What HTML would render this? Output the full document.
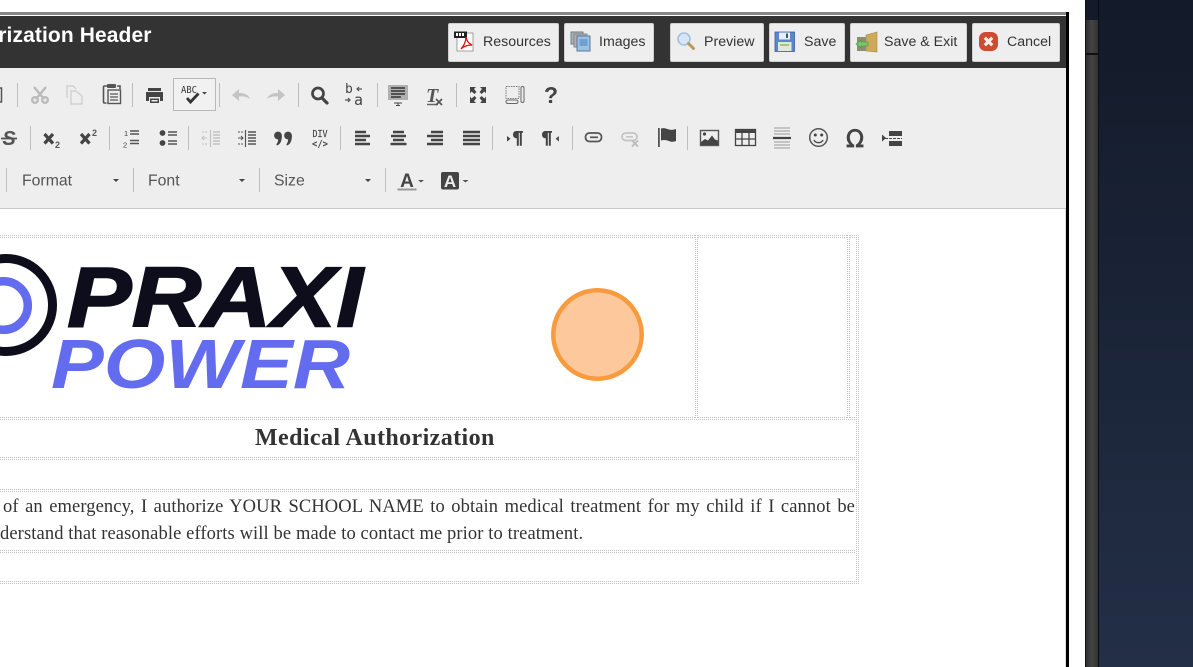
<!DOCTYPE html>
<html><head><meta charset="utf-8"><style>
html,body{margin:0;padding:0;width:1193px;height:667px;overflow:hidden;background:#fff;font-family:"Liberation Sans",sans-serif}
.a{position:absolute}
.btn{position:absolute;top:23px;height:37px;background:#eee;border:1px solid #d0d0d0;border-radius:2px;box-sizing:content-box}
.bt{position:absolute;top:33px;font-size:14.2px;line-height:16px;color:#333;white-space:nowrap}
.dh{position:absolute;height:3px;background:linear-gradient(#fff,#fff) center/100% 1px no-repeat,repeating-linear-gradient(90deg,#c2c2c2 0 1px,#fff 1px 2px)}
.dv{position:absolute;width:3px;background:linear-gradient(#fff,#fff) center/1px 100% no-repeat,repeating-linear-gradient(180deg,#c2c2c2 0 1px,#fff 1px 2px)}
.txt{position:absolute;font-family:"Liberation Serif",serif;color:#333;white-space:nowrap}
</style></head><body>
<div class="a" style="left:1085px;top:0;width:108px;height:667px;background:linear-gradient(180deg,#131a29 0,#232f47 100%)"></div>
<div class="a" style="left:1085px;top:20px;width:13px;height:647px;background:linear-gradient(90deg,#2b2b2b,#444 50%,#333)"></div>
<div class="a" style="left:1085px;top:0;width:1px;height:667px;background:#111"></div>
<div class="a" style="left:1098px;top:0;width:1px;height:667px;background:#0a0d14"></div>
<div class="a" style="left:1086px;top:53px;width:12px;height:2px;background:#111"></div>
<div class="a" style="left:0;top:0;width:1085px;height:667px;background:#fff;border-top-right-radius:15px"></div>
<div class="a" style="left:0;top:12px;width:1066px;height:3px;background:#888"></div>
<div class="a" style="left:0;top:16px;width:1066px;height:52px;background:#333"></div>
<div class="a" style="left:1066px;top:12px;width:3px;height:655px;background:#000"></div>
<div class="a" style="left:0;top:68px;width:1066px;height:140px;background:#eee"></div>
<div class="a" style="left:0;top:208px;width:1066px;height:1px;background:#c8c8c8"></div>
<div class="a" style="left:1065px;top:209px;width:1px;height:458px;background:#ddd"></div>

<svg class="a" style="left:0;top:0" width="1066" height="70">
<text x="151.500" y="42" text-anchor="end" font-family="Liberation Sans" font-weight="700" font-size="21" letter-spacing=".1" fill="#fff">Medical Authorization Header</text>
</svg>
<div class="btn" style="left:448px;width:109px"></div>
<div class="btn" style="left:564px;width:88px"></div>
<div class="btn" style="left:670px;width:92px"></div>
<div class="btn" style="left:769px;width:74px"></div>
<div class="btn" style="left:850px;width:115px"></div>
<div class="btn" style="left:972px;width:86px"></div>
<div class="bt" style="left:483px;top:34px">Resources</div>
<div class="bt" style="left:599px;top:34px">Images</div>
<div class="bt" style="left:704px;top:34px">Preview</div>
<div class="bt" style="left:804px;top:34px">Save</div>
<div class="bt" style="left:884px;top:34px">Save &amp; Exit</div>
<div class="bt" style="left:1007px;top:34px">Cancel</div>

<!-- button icons -->
<svg class="a" style="left:0;top:0" width="1066" height="70">
<!-- pdf -->
<path d="M457 33h16v18h-16z" fill="#fff" stroke="#888" stroke-width=".8"/>
<rect x="454" y="31.500" width="13" height="6.500" fill="#222"/>
<path d="M456 33h2v3h-2zM459 33h2v3h-2zM462 33h2v3h-2z" fill="#fff"/>
<path d="M461 49c3-3 5-8 5-12 1 4 2 6 6 8-4 0-8 1-11 4z" fill="none" stroke="#d11" stroke-width="1.300"/>
<!-- images -->
<rect x="571" y="32" width="12" height="12" fill="#a8b8a8" stroke="#6a7f96"/>
<rect x="574" y="34" width="13" height="13" fill="#c0a8a8" stroke="#7a8a9a"/>
<rect x="577" y="36" width="13" height="15" fill="#9cc0e0" stroke="#5a7a9a"/>
<rect x="579.500" y="39" width="8" height="7" fill="#6fa0d4"/>
<!-- preview -->
<circle cx="684" cy="39" r="6" fill="#d6e6f7" stroke="#a5c0de" stroke-width="1.600"/>
<path d="M688.500 43.500l5 5" stroke="#b79a5c" stroke-width="3" stroke-linecap="round"/>
<!-- save -->
<path d="M775 32h19.500v19.500h-19.500z" fill="#5b86cc" stroke="#3a5e99" stroke-width=".8"/>
<rect x="779" y="32.500" width="11" height="7" fill="#e8eef7"/>
<rect x="786" y="33.500" width="2" height="4.500" fill="#456"/>
<rect x="778" y="42" width="13.500" height="9" fill="#dfe8dc"/>
<path d="M780 45h9" stroke="#9ab56e" stroke-width="1.500"/>
<!-- save & exit -->
<path d="M866 35l11-3v20l-11-1z" fill="#cdaa5a" stroke="#a68a44" stroke-width=".6"/>
<rect x="857" y="37" width="9" height="14" fill="#8a9070"/>
<path d="M856 44l5-4v2h7v4h-7v2z" fill="#7cc46a" stroke="#4d8f42" stroke-width=".6"/>
<!-- cancel -->
<rect x="979" y="32" width="19" height="19" rx="6.500" fill="#cf4a32"/>
<path d="M984.800 37.800l7.400 7.400m0-7.400l-7.400 7.400" stroke="#f6efe8" stroke-width="3.200"/>
</svg>

<!-- toolbar -->
<svg class="a" style="left:0;top:68px" width="1066" height="140" viewBox="0 68 1066 140" font-family="Liberation Sans">
<g fill="#bdbdbd">
<rect x="17" y="83" width="1" height="24"/><rect x="132" y="83" width="1" height="24"/><rect x="219" y="83" width="1" height="24"/><rect x="298" y="83" width="1" height="24"/><rect x="377" y="83" width="1" height="24"/><rect x="456" y="83" width="1" height="24"/>
<rect x="30" y="126" width="1" height="24"/><rect x="109" y="126" width="1" height="24"/><rect x="188" y="126" width="1" height="24"/><rect x="340" y="126" width="1" height="24"/><rect x="492" y="126" width="1" height="24"/><rect x="572" y="126" width="1" height="24"/><rect x="687" y="126" width="1" height="24"/>
<rect x="6" y="168" width="1" height="24"/><rect x="133" y="168" width="1" height="24"/><rect x="259" y="168" width="1" height="24"/><rect x="385" y="168" width="1" height="24"/>
</g>
<!-- paste edge -->
<path d="M0 88h1.500v14h-1.500" fill="none" stroke="#555" stroke-width="1.500"/>
<!-- cut -->
<g fill="none" stroke="#bbb" stroke-width="2.400"><path d="M34 87l10 12M46 87l-10 12"/><circle cx="35" cy="100" r="2.800"/><circle cx="45" cy="100" r="2.800"/></g>
<!-- copy -->
<g fill="none" stroke="#d0d0d0" stroke-width="1.400"><path d="M67 98v-12h6l3 3"/><path d="M71 91h5l6 5v8h-11z" fill="#eee"/></g>
<!-- paste -->
<g fill="none" stroke="#555"><path d="M107 86h-2.500a1 1 0 0 0-1 1v15a1 1 0 0 0 1 1h2" stroke-width="1.600"/><path d="M117 86h3v3" stroke-width="1.600"/><rect x="108" y="90" width="12.500" height="13.500" stroke-width="1.400"/><path d="M110 94h8M110 97h8M110 100h8" stroke-width="1.200"/></g>
<rect x="107" y="84" width="9" height="4" rx="1" fill="#555"/>
<!-- print -->
<path d="M148 88h13v3h-13zM146 92h17v9h-3v-4h-11v4h-3z" fill="#444"/><rect x="150" y="98.500" width="9" height="4.500" fill="#444"/><rect x="151.500" y="100" width="6" height="1.500" fill="#eee"/>
<!-- scayt -->
<rect x="173.500" y="78.500" width="42" height="32" fill="#f1f1f1" stroke="#b8b8b8"/>
<text x="181" y="93" font-size="10" font-family="DejaVu Sans Mono,Liberation Mono" fill="#333" textLength="16" lengthAdjust="spacingAndGlyphs">ABC</text>
<path d="M187 98l3.500 4 8-8.500" fill="none" stroke="#333" stroke-width="2.800"/>
<path d="M202 92h5l-2.500 2.500z" fill="#444"/>
<!-- undo/redo -->
<path d="M232 95l7-6v4c5 0 9 1 11 6-3-2-6-3-11-2.500v4.500z" fill="#c4c4c4"/>
<path d="M285 95l-7-6v4c-5 0-9 1-11 6 3-2 6-3 11-2.500v4.500z" fill="#c4c4c4"/>
<!-- find -->
<circle cx="318" cy="93.500" r="5.500" fill="none" stroke="#444" stroke-width="2.700"/><path d="M322 98l5 5" stroke="#444" stroke-width="3.200" stroke-linecap="round"/>
<!-- replace -->
<text x="345" y="93" font-size="13" font-family="DejaVu Sans Mono,Liberation Mono" fill="#444">b</text>
<text x="354" y="105" font-size="15" font-family="DejaVu Sans Mono,Liberation Mono" fill="#444">a</text>
<path d="M362 89h-5M359 87l-2 2 2 2M345 100h5M348 98l2 2-2 2" fill="none" stroke="#555" stroke-width="1.200"/>
<!-- selectall -->
<rect x="388" y="85" width="20" height="15" fill="#b0b0b0"/><path d="M391 88h14M391 91h14M391 94h14M391 97h10" stroke="#333" stroke-width="1.500"/>
<path d="M394 103h8M398 103v2.500M396 105.500h4" stroke="#444" stroke-width="1"/>
<!-- remove format -->
<text x="426" y="102" font-size="20" font-weight="700" font-style="italic" font-family="Liberation Serif" fill="#555">T</text>
<path d="M427 104.500h11" stroke="#666" stroke-width="1.500"/><path d="M436 99l6 6m0-6l-6 6" stroke="#555" stroke-width="1.700"/>
<!-- maximize -->
<path d="M470 87h6l-2 2 2.500 3-2 2-3-2.500-1.500 2zM486 87h-6l2 2-2.500 3 2 2 3-2.500 1.500 2zM470 103h6l-2-2 2.500-3-2-2-3 2.500-1.500-2zM486 103h-6l2-2-2.500-3 2-2 3 2.500 1.500-2z" fill="#444"/>
<!-- showblocks -->
<rect x="506" y="86.500" width="13" height="12" fill="none" stroke="#777" stroke-dasharray="1.500 1"/><rect x="521" y="86.500" width="3" height="16" rx="1.500" fill="none" stroke="#666"/><rect x="506" y="100" width="12" height="3.500" rx="1.700" fill="none" stroke="#666"/>
<!-- help -->
<text x="551" y="103" text-anchor="middle" font-size="23" font-weight="700" fill="#444">?</text>

<!-- row 2 -->
<text x="9" y="145" text-anchor="middle" font-size="20" font-weight="700" font-style="italic" fill="#555">S</text><path d="M1 138.500h16" stroke="#555" stroke-width="1.800"/>
<path d="M44.500 134l8.500 9.500m0-9.500l-8.500 9.500" stroke="#444" stroke-width="3.200"/><text x="55" y="148" font-size="9" font-weight="700" fill="#555">2</text>
<path d="M81 134l8.500 9.500m0-9.500l-8.500 9.500" stroke="#444" stroke-width="3.200"/><text x="92" y="136" font-size="9" font-weight="700" fill="#555">2</text>
<!-- ol -->
<text x="124" y="136" font-size="7.500" fill="#444">1</text><text x="123" y="147.500" font-size="7.500" fill="#444">2</text>
<path d="M130 131h9M130 134h9M130 140.500h9M130 143.500h9" stroke="#555" stroke-width="1.500"/>
<!-- ul -->
<circle cx="162.500" cy="133" r="2.900" fill="#444"/><circle cx="162.500" cy="143" r="2.900" fill="#444"/><path d="M168 132h9M168 135h9M168 141h9M168 144h9" stroke="#555" stroke-width="1.500"/>
<!-- outdent -->
<g stroke="#c2c2c2" fill="none"><path d="M202 132h6M202 144h6" stroke-dasharray="2 1"/><path d="M210.500 130v17" stroke-width="1.200"/><path d="M213 132h7M213 135h7M213 138h7M213 141h7M213 144h7" stroke-width="1.400"/><path d="M207 138h-5m2-2l-2 2 2 2"/></g>
<!-- indent -->
<g stroke="#555" fill="none"><path d="M238 132h6M238 144h6" stroke-dasharray="2 1"/><path d="M245.500 130v17" stroke-width="1.200"/><path d="M248 132h8M248 135h8M248 138h8M248 141h8M248 144h8" stroke-width="1.400"/><path d="M238 138h5m-2-2l2 2-2 2"/></g>
<!-- quote -->
<g fill="#444"><circle cx="278" cy="135.500" r="3.900"/><circle cx="288" cy="135.500" r="3.900"/><path d="M277 145.500c3-1 4.800-4 4.900-9.500l-4 1c.5 3 .2 5-1.600 7.500zM287 145.500c3-1 4.800-4 4.900-9.500l-4 1c.5 3 .2 5-1.600 7.500z"/></g>
<!-- div -->
<text x="320" y="137" text-anchor="middle" font-size="10" font-family="DejaVu Sans Mono,Liberation Mono" fill="#444" stroke="#444" stroke-width=".2" textLength="15" lengthAdjust="spacingAndGlyphs">DIV</text>
<text x="320" y="147" text-anchor="middle" font-size="10" font-weight="700" font-family="DejaVu Sans Mono,Liberation Mono" fill="#444" textLength="16" lengthAdjust="spacingAndGlyphs">&lt;/&gt;</text>
<!-- aligns -->
<g stroke="#444" stroke-width="2.600">
<path d="M355 132h11M355 136h15M355 140h11M355 144h15"/>
<path d="M393 132h11M391 136h15M393 140h11M390.500 144h16"/>
<path d="M431 132h12M427 136h16M431 140h12M427 144h16"/>
<path d="M463 132h17M463 136h17M463 140h17M463 144h17"/>
</g>
<!-- ltr/rtl -->
<path d="M507 136l3.500 2.800-3.500 2.800z" fill="#444"/>
<path d="M516 131h7v1.800h-1.200v13h-2v-13h-1v13h-2v-7.500c-2.500 0-3.800-1.600-3.800-3.700s1.500-3.600 3-3.600z" fill="#444"/>
<path d="M545 131h7v1.800h-1.200v13h-2v-13h-1v13h-2v-7.500c-2.500 0-3.800-1.600-3.800-3.700s1.500-3.600 3-3.600z" fill="#444"/>
<path d="M559 136l-3.500 2.800 3.500 2.800z" fill="#555"/>
<!-- link -->
<rect x="585.500" y="133" width="16" height="8.500" rx="4" fill="none" stroke="#555" stroke-width="1.800"/><path d="M590 137.300h8" stroke="#555" stroke-width="1.700"/>
<!-- unlink -->
<rect x="622" y="133" width="15" height="7.500" rx="3.700" fill="none" stroke="#c4c4c4" stroke-width="1.800"/><path d="M626 136.800h7" stroke="#c4c4c4" stroke-width="1.500"/><path d="M632 140.500l6 6m0-6l-6 6" stroke="#bbb" stroke-width="1.800"/>
<!-- flag -->
<rect x="658" y="128" width="1.800" height="19" fill="#555"/><path d="M661 128.500c3-1 5 0 8 1 2 .5 4 .5 7-.5v12c-3 1-5 1-7 0-3-1-5-1.500-8-.5z" fill="#444"/>
<!-- image -->
<rect x="700.500" y="130.500" width="18" height="15" fill="#eee" stroke="#555" stroke-width="1.400"/><circle cx="704.500" cy="134" r="1.600" fill="#444"/><path d="M701 145v-3l4-3 3 1.500 4-5 3 4 3 1v4.500z" fill="#444"/>
<!-- table -->
<rect x="735.500" y="129" width="20" height="4" fill="#444"/><rect x="735.500" y="129.500" width="20" height="16" fill="none" stroke="#444" stroke-width="1.300"/><path d="M742 133v12M749 133v12M736 139h19" stroke="#444" stroke-width="1.300"/>
<!-- hr -->
<path d="M774 128h16M774 131h16M774 134h16M774 142h16M774 145h16M774 148h16" stroke="#aaa" stroke-width="1.200"/><path d="M773 138h18" stroke="#444" stroke-width="2.200"/>
<!-- smiley -->
<circle cx="818.500" cy="137.500" r="8.800" fill="none" stroke="#555" stroke-width="1.500"/><circle cx="815.300" cy="135" r="1.500" fill="#444"/><circle cx="821.700" cy="135" r="1.500" fill="#444"/><path d="M814 140c1.500 3.500 7.500 3.500 9 0" fill="none" stroke="#444" stroke-width="1.400"/>
<!-- omega -->
<text x="855" y="147" text-anchor="middle" font-size="24" font-family="DejaVu Sans" fill="#444" stroke="#444" stroke-width=".7" textLength="18" lengthAdjust="spacingAndGlyphs">Ω</text>
<!-- pagebreak -->
<path d="M882 134.500l4 3.500-4 3.500z" fill="#444"/><rect x="889" y="131" width="13" height="5" fill="#444"/><rect x="889" y="141" width="13" height="5" fill="#444"/><path d="M885 138.500h17" stroke="#444" stroke-dasharray="3 1"/>
<!-- row 3 -->
<text x="22" y="185.500" font-size="15.800" fill="#555">Format</text>
<text x="148" y="185.500" font-size="15.800" fill="#555">Font</text>
<text x="274" y="185.500" font-size="15.800" fill="#555">Size</text>
<path d="M113 179h6l-3 3zM239 179h6l-3 3zM365 179h6l-3 3z" fill="#444"/>
<text x="407" y="187" text-anchor="middle" font-size="19" font-weight="700" fill="#444">A</text>
<rect x="397.500" y="188.500" width="19" height="2" fill="#999"/>
<path d="M418 180h6l-3 2.500z" fill="#555"/>
<rect x="441" y="172" width="18" height="17.500" rx="2" fill="#444"/>
<text x="450" y="187" text-anchor="middle" font-size="17" font-weight="700" fill="#eee">A</text>
<path d="M462.500 180h6l-3 2.500z" fill="#555"/>
</svg>

<!-- content lines -->
<div class="dh" style="left:0;top:235px;width:859px"></div>
<div class="dh" style="left:0;top:417px;width:859px"></div>
<div class="dh" style="left:0;top:457px;width:859px"></div>
<div class="dh" style="left:0;top:489px;width:859px"></div>
<div class="dh" style="left:0;top:550px;width:859px"></div>
<div class="dh" style="left:0;top:581px;width:859px"></div>
<div class="dv" style="left:695px;top:235px;height:184px"></div>
<div class="dv" style="left:847px;top:235px;height:184px"></div>
<div class="dv" style="left:856px;top:235px;height:349px"></div>

<!-- logo + marker -->
<svg class="a" style="left:0;top:230px" width="700" height="190" viewBox="0 230 700 190">
<circle cx="6" cy="305" r="46.500" fill="none" stroke="#0d0d1c" stroke-width="9"/>
<circle cx="3.500" cy="305.500" r="24.300" fill="none" stroke="#636bee" stroke-width="8.500"/>
<text x="67" y="326.500" font-family="Liberation Sans" font-weight="700" font-style="italic" font-size="85" fill="#0d0d1c" stroke="#0d0d1c" stroke-width="1.500" textLength="296" lengthAdjust="spacingAndGlyphs">PRAXI</text>
<text x="51" y="388" font-family="Liberation Sans" font-weight="700" font-style="italic" font-size="70" fill="#636bee" textLength="299" lengthAdjust="spacingAndGlyphs">POWER</text>
<circle cx="597.500" cy="334.500" r="44.200" fill="#fdc99c" stroke="#f89a3e" stroke-width="4.500"/>
</svg>

<div class="txt" style="left:255px;top:425px;font-size:24px;line-height:27px;font-weight:700;letter-spacing:.4px">Medical Authorization</div>
<div class="txt" style="left:3px;top:496px;width:852px;font-size:18.500px;line-height:22px;letter-spacing:.1px;text-align:justify;text-align-last:justify;white-space:normal">of an emergency, I authorize YOUR SCHOOL NAME to obtain medical treatment for my child if I cannot be</div>
<div class="txt" style="left:0;top:523px;font-size:18.500px;line-height:22px;letter-spacing:.11px">derstand that reasonable efforts will be made to contact me prior to treatment.</div>
</body></html>
